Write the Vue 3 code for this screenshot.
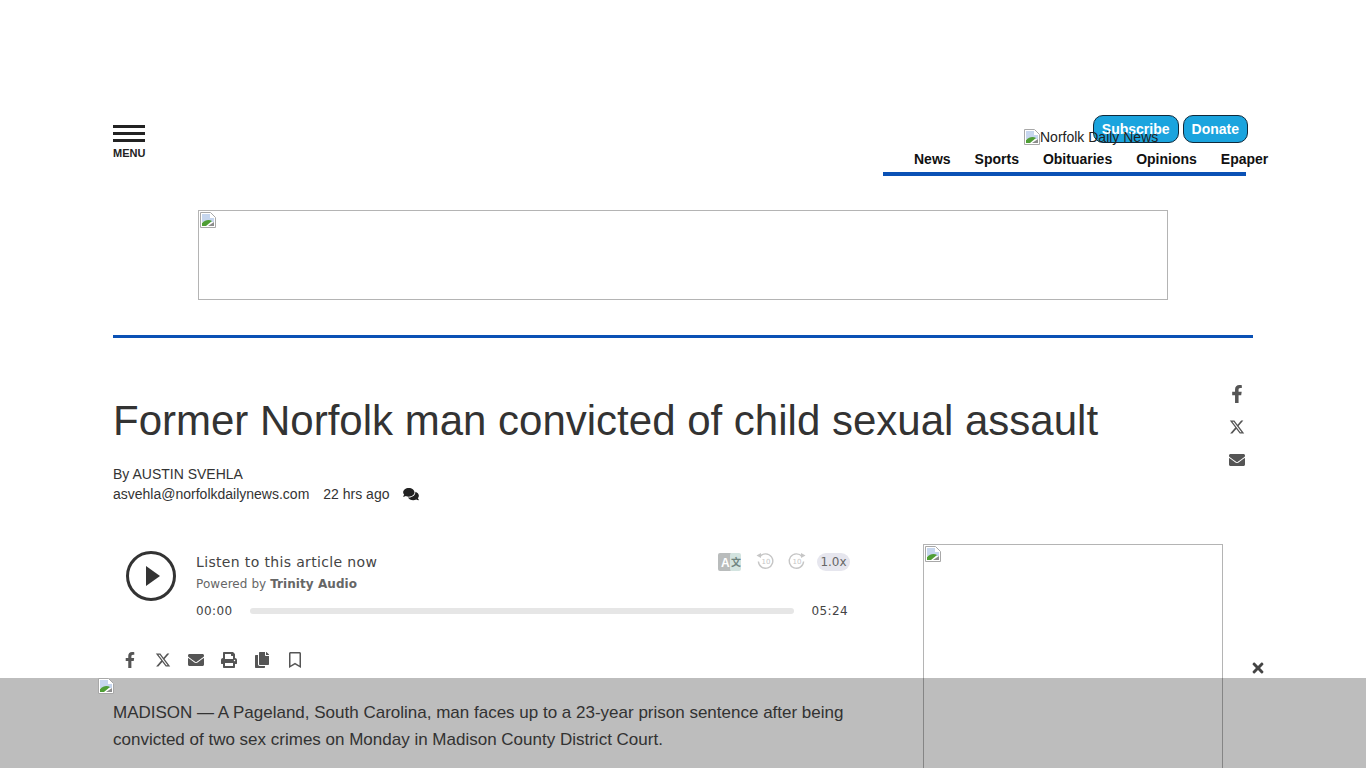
<script setup>
const nav = ['News', 'Sports', 'Obituaries', 'Opinions', 'Epaper']

const icons = {
  facebook: { box: '0 0 320 512', d: 'M279.14 288l14.22-92.66h-88.91v-60.13c0-25.35 12.42-50.06 52.24-50.06h40.42V6.26S260.43 0 225.36 0c-73.22 0-121.08 44.38-121.08 124.72v70.62H22.89V288h81.39v224h100.17V288z' },
  x: { box: '0 0 512 512', d: 'M389.2 48h70.6L305.6 224.2 487 464H345L233.7 318.6 106.5 464H35.8L200.7 275.5 26.8 48H172.4L272.9 180.9 389.2 48zM364.4 421.8h39.1L151.1 88h-42L364.4 421.8z' },
  envelope: { box: '0 0 512 512', d: 'M502.3 190.8c3.9-3.1 9.7-.2 9.7 4.7V400c0 26.5-21.5 48-48 48H48c-26.5 0-48-21.5-48-48V195.6c0-5 5.7-7.8 9.7-4.7 22.4 17.4 52.1 39.5 154.1 113.6 21.1 15.4 56.7 47.8 92.2 47.6 35.7.3 72-32.8 92.3-47.6 102-74.1 131.6-96.3 154-113.7zM256 320c23.2.4 56.6-29.2 73.4-41.4 132.7-96.3 142.8-104.7 173.4-128.7 5.8-4.5 9.2-11.5 9.2-18.9v-19c0-26.5-21.5-48-48-48H48C21.5 64 0 85.5 0 112v19c0 7.4 3.4 14.3 9.2 18.9 30.6 23.9 40.7 32.4 173.4 128.7 16.8 12.2 50.2 41.8 73.4 41.4z' },
  print: { box: '0 0 512 512', d: 'M448 192V77.25c0-8.49-3.37-16.62-9.37-22.63L393.37 9.37c-6-6-14.14-9.37-22.63-9.37H96C78.33 0 64 14.33 64 32v160c-35.35 0-64 28.65-64 64v112c0 8.84 7.16 16 16 16h48v96c0 17.67 14.33 32 32 32h320c17.67 0 32-14.33 32-32v-96h48c8.84 0 16-7.16 16-16V256c0-35.35-28.65-64-64-64zm-64 256H128v-96h256v96zm0-224H128V64h192v48c0 8.84 7.16 16 16 16h48v96zm48 72c-13.25 0-24-10.75-24-24 0-13.26 10.75-24 24-24s24 10.74 24 24c0 13.25-10.75 24-24 24z' },
  copy: { box: '0 0 448 512', d: 'M320 448v40c0 13.255-10.745 24-24 24H24c-13.255 0-24-10.745-24-24V120c0-13.255 10.745-24 24-24h72v296c0 30.879 25.121 56 56 56h168zm0-344V0H152c-13.255 0-24 10.745-24 24v368c0 13.255 10.745 24 24 24h272c13.255 0 24-10.745 24-24V128H344c-13.2 0-24-10.8-24-24zm120.971-31.029L375.029 7.029A24 24 0 0 0 358.059 0H352v96h96v-6.059a24 24 0 0 0-7.029-16.97z' },
  bookmark: { box: '0 0 384 512', d: 'M336 0H48C21.49 0 0 21.49 0 48v464l192-112 192 112V48c0-26.51-21.49-48-48-48zm0 428.43l-144-84-144 84V54a6 6 0 0 1 6-6h276c3.31 0 6 2.69 6 5.99V428.43z' },
  comments: { box: '0 0 576 512', d: 'M416 192c0-88.4-93.1-160-208-160S0 103.6 0 192c0 34.3 14.1 65.9 38 92-13.4 30.2-35.5 54.2-35.8 54.5-2.2 2.3-2.8 5.7-1.5 8.7S4.8 352 8 352c36.6 0 66.9-12.3 88.7-25 32.2 15.7 70.3 25 111.3 25 114.9 0 208-71.6 208-160zm122 220c23.9-26 38-57.7 38-92 0-66.9-53.5-124.2-129.3-148.1.9 6.6 1.3 13.3 1.3 20.1 0 105.9-107.7 192-240 192-10.8 0-21.3-.8-31.7-1.9C207.8 439.6 281.8 480 368 480c41 0 79.1-9.2 111.3-25 21.8 12.7 52.1 25 88.7 25 3.2 0 6.1-1.9 7.3-4.8 1.3-2.9.7-6.3-1.5-8.7-.3-.3-22.4-24.2-35.8-54.5z' },
  times: { box: '0 0 352 512', d: 'M242.72 256l100.07-100.07c12.28-12.28 12.28-32.19 0-44.48l-22.24-22.24c-12.28-12.28-32.19-12.28-44.48 0L176 189.28 75.93 89.21c-12.28-12.28-32.19-12.28-44.48 0L9.21 111.45c-12.28 12.28-12.28 32.19 0 44.48L109.28 256 9.21 356.07c-12.28 12.28-12.28 32.19 0 44.48l22.24 22.24c12.28 12.28 32.2 12.28 44.48 0L176 322.72l100.07 100.07c12.28 12.28 32.2 12.28 44.48 0l22.24-22.24c12.28-12.28 12.28-32.19 0-44.48L242.72 256z' },
}

const railIcons = ['facebook', 'x', 'envelope']
const toolIcons = ['facebook', 'x', 'envelope', 'print', 'copy', 'bookmark']
</script>

<template>
  <div class="page">
    <header class="header">
      <div class="menu">
        <span class="bar"></span>
        <span class="bar"></span>
        <span class="bar"></span>
        <span class="menu-label">MENU</span>
      </div>
      <div class="header-right">
        <div class="buttons">
          <a class="btn">Subscribe</a>
          <a class="btn">Donate</a>
        </div>
        <div class="logo">
          <svg class="broken" viewBox="0 0 16 16"><path d="M.5.5h10l5 5v10H.5z" fill="#fff" stroke="#a8a8a8"/><path d="M2 2h8v4h4v4H2z" fill="#c6d6ee"/><path d="M2 14v-3c3-3 7-4 10-2l-6 5z" fill="#4f9e35"/><path d="M8 14l6-4v4z" fill="#8c8c8c"/></svg>
          <span>Norfolk Daily News</span>
        </div>
        <nav class="nav">
          <a v-for="n in nav" :key="n">{{ n }}</a>
        </nav>
      </div>
    </header>

    <div class="leaderboard">
      <svg class="broken" viewBox="0 0 16 16"><path d="M.5.5h10l5 5v10H.5z" fill="#fff" stroke="#a8a8a8"/><path d="M2 2h8v4h4v4H2z" fill="#c6d6ee"/><path d="M2 14v-3c3-3 7-4 10-2l-6 5z" fill="#4f9e35"/><path d="M8 14l6-4v4z" fill="#8c8c8c"/></svg>
    </div>
    <div class="rule"></div>

    <div class="head-row">
      <div class="head-main">
        <h1 class="title">Former Norfolk man convicted of child sexual assault</h1>
        <div class="byline">By AUSTIN SVEHLA</div>
        <div class="meta">
          <span>asvehla@norfolkdailynews.com</span>
          <span class="time">22 hrs ago</span>
          <svg class="comments" :viewBox="icons.comments.box"><path :d="icons.comments.d"/></svg>
        </div>
      </div>
      <div class="rail">
        <svg v-for="i in railIcons" :key="i" :viewBox="icons[i].box"><path :d="icons[i].d"/></svg>
      </div>
    </div>

    <div class="content">
      <main class="article">
        <section class="player">
          <div class="play"><span class="tri"></span></div>
          <div class="player-body">
            <div class="player-top">
              <div>
                <div class="listen">Listen to this article now</div>
                <div class="powered">Powered by <b>Trinity Audio</b></div>
              </div>
              <div class="controls">
                <svg class="translate" width="23" height="20" viewBox="0 0 23 20">
                  <rect x="0" y="1" width="14" height="18" rx="2" fill="#b9bcbc"/>
                  <rect x="12" y="1" width="11" height="18" rx="2" fill="#d3e4e0"/>
                  <text x="3" y="15" font-size="12" font-weight="700" font-family="Liberation Sans, sans-serif" fill="#fff">A</text>
                  <text x="13" y="14" font-size="10" font-weight="700" font-family="Noto Sans CJK SC, sans-serif" fill="#6f8580">文</text>
                </svg>
                <svg class="skip" width="20" height="18" viewBox="0 0 20 18">
                  <path d="M5 4.5a7.2 7.2 0 1 1-1.6 5" fill="none" stroke="#c6c6c6" stroke-width="1.4"/>
                  <path d="M1.5 3.5l4.5-2.5v5z" fill="#c6c6c6"/>
                  <text x="6.5" y="12" font-size="7" font-family="DejaVu Sans, sans-serif" fill="#c6c6c6">10</text>
                </svg>
                <svg class="skip" width="20" height="18" viewBox="0 0 20 18">
                  <path d="M15 4.5a7.2 7.2 0 1 0 1.6 5" fill="none" stroke="#c6c6c6" stroke-width="1.4"/>
                  <path d="M18.5 3.5l-4.5-2.5v5z" fill="#c6c6c6"/>
                  <text x="5.5" y="12" font-size="7" font-family="DejaVu Sans, sans-serif" fill="#c6c6c6">10</text>
                </svg>
                <span class="speed">1.0x</span>
              </div>
            </div>
            <div class="progress">
              <span>00:00</span>
              <div class="track"></div>
              <span>05:24</span>
            </div>
          </div>
        </section>

        <div class="tools">
          <span v-for="i in toolIcons" :key="i" class="tool">
            <svg :viewBox="icons[i].box"><path :d="icons[i].d"/></svg>
          </span>
        </div>

        <p class="body-text">MADISON — A Pageland, South Carolina, man faces up to a 23-year prison sentence after being convicted of two sex crimes on Monday in Madison County District Court.</p>
      </main>

      <aside class="side-ad">
        <svg class="broken" viewBox="0 0 16 16"><path d="M.5.5h10l5 5v10H.5z" fill="#fff" stroke="#a8a8a8"/><path d="M2 2h8v4h4v4H2z" fill="#c6d6ee"/><path d="M2 14v-3c3-3 7-4 10-2l-6 5z" fill="#4f9e35"/><path d="M8 14l6-4v4z" fill="#8c8c8c"/></svg>
      </aside>
    </div>

    <div class="sticky">
      <svg class="broken sticky-img" viewBox="0 0 16 16"><path d="M.5.5h10l5 5v10H.5z" fill="#fff" stroke="#a8a8a8"/><path d="M2 2h8v4h4v4H2z" fill="#c6d6ee"/><path d="M2 14v-3c3-3 7-4 10-2l-6 5z" fill="#4f9e35"/><path d="M8 14l6-4v4z" fill="#8c8c8c"/></svg>
      <svg class="close" :viewBox="icons.times.box"><path :d="icons.times.d"/></svg>
    </div>
  </div>
</template>

<style>
html, body {
  overflow: hidden;
  height: 768px;
}
</style>

<style scoped>
.page {
  width: 1140px;
  margin: 0 auto;
  padding-top: 115px;
  font-family: "Liberation Sans", Arial, sans-serif;
  color: #333;
}

.broken {
  display: block;
  width: 16px;
  height: 16px;
  flex: none;
}

/* header */
.header {
  display: flex;
  justify-content: space-between;
  height: 62px;
}

.menu {
  display: flex;
  flex-direction: column;
  gap: 4px;
  width: 32px;
  padding-top: 10px;
}

.bar {
  height: 3px;
  background: #222;
}

.menu-label {
  font-size: 11px;
  line-height: 14px;
  font-weight: 700;
  color: #222;
}

.header-right {
  position: relative;
  width: 363px;
  margin-right: 7px;
  border-bottom: 4px solid #0a51b5;
  height: 57px;
}

.buttons {
  display: flex;
  justify-content: flex-end;
  gap: 4px;
  margin-right: -2px;
}

.btn {
  box-sizing: border-box;
  height: 28px;
  padding: 0 8px;
  border: 1px solid #10293a;
  border-radius: 10px;
  background: #1ba4de;
  color: #fff;
  font-size: 14px;
  font-weight: 700;
  line-height: 26px;
}

.logo {
  position: absolute;
  left: 141px;
  top: 13px;
  display: flex;
  align-items: center;
  font-size: 14px;
  line-height: 18px;
  color: #222;
  white-space: nowrap;
}

.nav {
  display: flex;
  gap: 24px;
  padding: 8px 0 0 31px;
  white-space: nowrap;
  font-size: 14px;
  line-height: 16px;
  font-weight: 700;
  color: #111;
}

/* ad + rule */
.leaderboard {
  box-sizing: border-box;
  width: 970px;
  height: 90px;
  margin: 33px auto 0;
  padding: 1px;
  border: 1px solid #b4b4b4;
}

.rule {
  height: 3px;
  margin-top: 35px;
  background: #0a51b5;
}

/* headline */
.head-row {
  display: flex;
  justify-content: space-between;
  height: 206px;
}

.title {
  margin: 59px 0 0;
  font-size: 42px;
  line-height: 48px;
  font-weight: 400;
  color: #333;
}

.byline {
  margin-top: 19px;
  font-size: 14px;
  line-height: 20px;
}

.meta {
  display: flex;
  align-items: center;
  font-size: 14px;
  line-height: 20px;
}

.time {
  margin-left: 14px;
}

.comments {
  width: 16px;
  height: 14px;
  margin-left: 14px;
  fill: #222;
}

.rail {
  display: flex;
  flex-direction: column;
  align-items: center;
  gap: 15px;
  width: 18px;
  margin: 47px 7px 0 0;
}

.rail svg {
  width: 16px;
  height: 18px;
  fill: #555;
}

/* content */
.content {
  display: flex;
  justify-content: space-between;
}

.article {
  width: 750px;
}

.player {
  display: flex;
  gap: 20px;
  padding-left: 13px;
  color: #444;
  font-family: "DejaVu Sans", Verdana, sans-serif;
}

.play {
  display: flex;
  align-items: center;
  justify-content: center;
  box-sizing: border-box;
  width: 50px;
  height: 50px;
  margin-top: 7px;
  border: 3px solid #333;
  border-radius: 50%;
}

.tri {
  margin-left: 3px;
  border-left: 14px solid #333;
  border-top: 10px solid transparent;
  border-bottom: 10px solid transparent;
}

.player-body {
  width: 652px;
}

.player-top {
  display: flex;
  justify-content: space-between;
  padding-top: 8px;
}

.listen {
  font-size: 14px;
  line-height: 20px;
  letter-spacing: 0.35px;
}

.powered {
  margin-top: 3px;
  font-size: 12px;
  line-height: 18px;
  letter-spacing: 0.07px;
  color: #666;
}

.controls {
  display: flex;
  align-items: center;
  align-self: flex-start;
  gap: 12px;
  margin-right: -2px;
}

.translate {
  margin-right: 2px;
}

.skip {
  margin-top: -2px;
}

.speed {
  width: 33px;
  height: 18px;
  margin-left: -2px;
  border-radius: 9px;
  background: #e6e6ee;
  font-size: 12px;
  line-height: 18px;
  text-align: center;
  color: #666;
}

.progress {
  display: flex;
  align-items: center;
  gap: 17px;
  margin-top: 9px;
  font-size: 12px;
  line-height: 18px;
  letter-spacing: 0.4px;
  color: #444;
}

.track {
  flex: 1;
  height: 6px;
  border-radius: 3px;
  background: #e6e6e6;
}

.tools {
  display: flex;
  gap: 13px;
  margin-top: 32px;
  padding-left: 7px;
}

.tool {
  display: flex;
  justify-content: center;
  width: 20px;
}

.tool svg {
  height: 16px;
  width: 16px;
  fill: #555;
}

.body-text {
  margin: 31px 0 0;
  width: 740px;
  font-size: 17px;
  line-height: 27px;
  color: #454545;
}

.side-ad {
  box-sizing: border-box;
  width: 300px;
  height: 250px;
  margin-right: 30px;
  padding: 1px;
  border: 1px solid #b4b4b4;
}

/* sticky bottom bar */
.sticky {
  position: fixed;
  left: 0;
  right: 0;
  bottom: 0;
  height: 90px;
  background: rgba(0, 0, 0, 0.26);
}

.sticky-img {
  position: absolute;
  left: 98px;
  top: 0;
}

.close {
  position: absolute;
  right: 102px;
  top: -18px;
  width: 12px;
  height: 16px;
  fill: #444;
}
</style>
